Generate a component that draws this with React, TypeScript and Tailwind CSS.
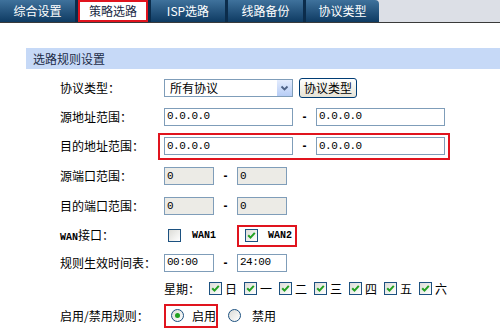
import React from "react";

const tabs = ["综合设置", "策略选路", "ISP选路", "线路备份", "协议类型"];
const days = ["日", "一", "二", "三", "四", "五", "六"];

function CheckBox({ checked }: { checked?: boolean }) {
  return (
    <span className="flex h-[13px] w-[13px] shrink-0 items-center justify-center border border-[#1c5180] bg-linear-to-br from-[#dcdcd7] to-[#ffffff]">
      {checked && (
        <svg width="9" height="9" viewBox="0 0 9 9">
          <path d="M1.2 4.2 L3.5 6.6 L7.8 1.8" fill="none" stroke="#21a121" strokeWidth="2" />
        </svg>
      )}
    </span>
  );
}

function Radio({ checked }: { checked?: boolean }) {
  return (
    <span className="flex h-[13px] w-[13px] shrink-0 items-center justify-center rounded-full border border-[#1c5180] bg-linear-to-br from-[#dcdcd7] to-[#ffffff]">
      {checked && <span className="h-[5px] w-[5px] rounded-full bg-[#21a121]" />}
    </span>
  );
}

function Field({ value, w, gray }: { value: string; w: string; gray?: boolean }) {
  return (
    <span
      className={`flex h-[18px] items-center border border-[#7f9db9] pl-[2px] font-['Liberation_Mono',monospace] text-[11px] tracking-[-0.5px] text-black ${w} ${
        gray ? "bg-[#ecebe6]" : "bg-white"
      }`}
    >
      {value}
    </span>
  );
}

function Dash() {
  return <span className="w-[23px] text-center font-['Liberation_Sans',sans-serif] text-[12px] font-bold">-</span>;
}

function Row({ label, h, children }: { label: string; h: string; children: React.ReactNode }) {
  return (
    <div className={`flex items-center ${h}`}>
      <span className="w-[164px] shrink-0 pl-[60px] text-[12px] text-black">{label}</span>
      <div className="flex items-center">{children}</div>
    </div>
  );
}

// widths of the dark tabs, separators included
const tabBox = [
  "w-[78px] border-r-[3px]",
  "",
  "w-[80px] border-x-[3px]",
  "w-[78px] border-r-[3px]",
  "w-[73px] rounded-tr-[4px]",
];

export default function App() {
  return (
    <div className="h-[329px] w-[500px] overflow-hidden bg-white font-['Noto_Sans_CJK_SC','Liberation_Sans',sans-serif] leading-none">
      {/* tab bar */}
      <div className="flex h-[23px] border-b border-[#3a3a3a] bg-[#dcdfe6]">
        {tabs.map((t, i) =>
          i === 1 ? (
            <div
              key={t}
              className="flex w-[70px] items-center justify-center border-2 border-[#e0141e] bg-white text-[12px] text-[#1a2a44]"
            >
              {t}
            </div>
          ) : (
            <div
              key={t}
              className={`flex items-center justify-center border-[#0b2c4b] bg-linear-to-b from-[#3f729c] to-[#0e3b63] text-[12px] text-white ${tabBox[i]}`}
            >
              {t}
            </div>
          )
        )}
      </div>

      {/* section title */}
      <div className="ml-[26px] mt-[25px] flex h-[21px] items-center bg-[#c6d9f7] pl-[7px] text-[12px] text-[#1c2c48]">
        选路规则设置
      </div>

      <div className="mt-[5px]">
        <Row label="协议类型：" h="h-[28px]">
          <span className="flex h-[18px] w-[129px] items-center justify-between border border-[#7f9db9] bg-white pl-[5px] text-[12px]">
            所有协议
            <span className="flex h-[16px] w-[15px] items-center justify-center bg-linear-to-b from-[#e4ecfd] to-[#b7cdf6]">
              <svg width="9" height="7" viewBox="0 0 9 7">
                <path d="M1.5 1.5 L4.5 4.5 L7.5 1.5" fill="none" stroke="#4d6185" strokeWidth="1.8" />
              </svg>
            </span>
          </span>
          <span className="ml-[6px] flex h-[20px] w-[58px] items-center justify-center rounded-[3px] border border-[#003c74] bg-linear-to-b from-[#ffffff] to-[#e6e3d6] text-[12px]">
            协议类型
          </span>
        </Row>

        <Row label="源地址范围：" h="h-[29px]">
          <Field value="0.0.0.0" w="w-[129px]" />
          <Dash />
          <Field value="0.0.0.0" w="w-[129px]" />
        </Row>

        <Row label="目的地址范围：" h="h-[30px]">
          <div className="-ml-[6px] flex h-[27px] w-[292px] items-center border-2 border-[#e0141e] pl-[4px]">
            <Field value="0.0.0.0" w="w-[129px]" />
            <Dash />
            <Field value="0.0.0.0" w="w-[129px]" />
          </div>
        </Row>

        <Row label="源端口范围：" h="h-[30px]">
          <Field value="0" w="w-[50px]" gray />
          <Dash />
          <Field value="0" w="w-[50px]" gray />
        </Row>

        <Row label="目的端口范围：" h="h-[30px]">
          <Field value="0" w="w-[50px]" gray />
          <Dash />
          <Field value="0" w="w-[50px]" gray />
        </Row>

        <div className="flex h-[29px] items-center">
          <span className="w-[164px] shrink-0 pl-[60px] text-[12px]">
            <span className="font-['Liberation_Mono',monospace] text-[10px] font-bold">WAN</span>接口：
          </span>
          <span className="ml-[4px]">
            <CheckBox />
          </span>
          <span className="ml-[11px] font-['Liberation_Mono',monospace] text-[10px] font-bold">WAN1</span>
          <div className="ml-[21px] flex h-[22px] w-[60px] items-center border-2 border-[#e0141e] pl-[6px]">
            <CheckBox checked />
            <span className="ml-[10px] font-['Liberation_Mono',monospace] text-[10px] font-bold">WAN2</span>
          </div>
        </div>

        <Row label="规则生效时间表：" h="h-[25px]">
          <Field value="00:00" w="w-[50px]" />
          <Dash />
          <Field value="24:00" w="w-[50px]" />
        </Row>

        <div className="flex h-[27px] items-center pl-[164px]">
          <span className="w-[45px] text-[12px]">星期：</span>
          {days.map((d) => (
            <span key={d} className="flex w-[35px] items-center">
              <CheckBox checked />
              <span className="ml-[3px] text-[12px]">{d}</span>
            </span>
          ))}
        </div>

        <Row label="启用/禁用规则：" h="h-[27px]">
          <div className="flex h-[24px] w-[54px] items-center border-2 border-[#e0141e] pl-[5px]">
            <Radio checked />
            <span className="ml-[8px] text-[12px]">启用</span>
          </div>
          <span className="ml-[10px]">
            <Radio />
          </span>
          <span className="ml-[11px] text-[12px]">禁用</span>
        </Row>
      </div>
    </div>
  );
}
